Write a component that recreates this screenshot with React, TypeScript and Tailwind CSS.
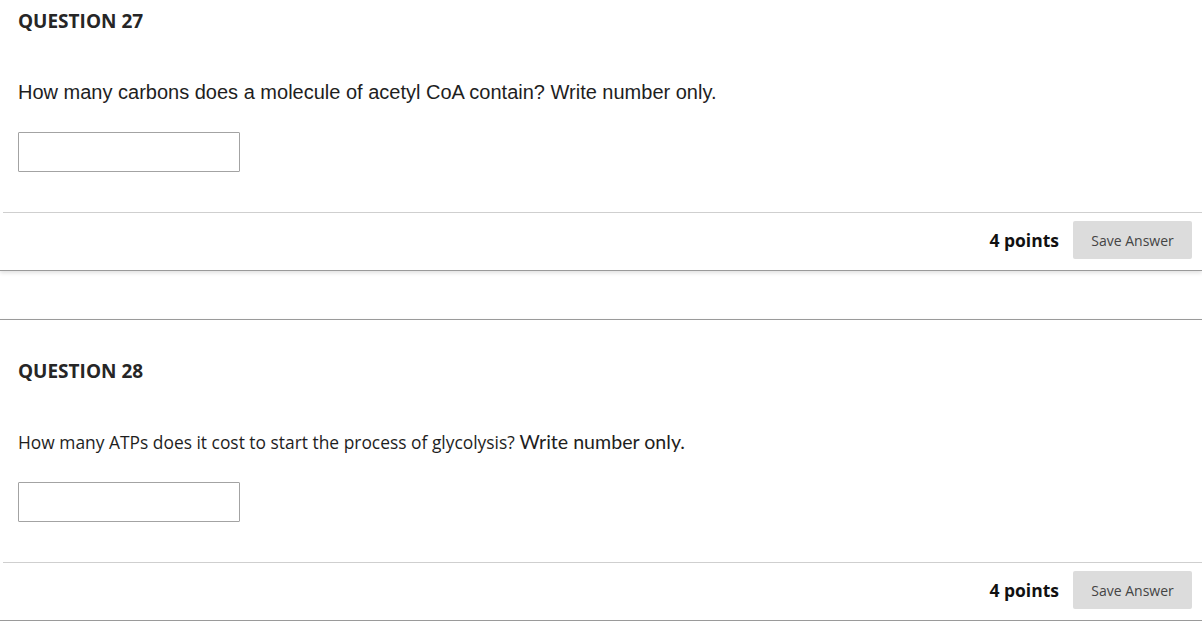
import type { ReactNode } from "react";

function QuestionCard({ title, children, className = "" }: { title: string; children: ReactNode; className?: string }) {
    return (
        <section className={`border-y border-[#9a9a9a] bg-white shadow-[0_2px_4px_rgba(0,0,0,0.12)] ${className}`}>
            {/* title */}
            <div className="pt-[39px] pl-[18px]">
                <h3
                    className="text-[19px] leading-[24px] font-bold text-[#262626]"
                    style={{ fontFamily: "'Open Sans', sans-serif" }}
                >
                    {title}
                </h3>
            </div>

            {/* question text */}
            <div className="mt-[47px] pl-[18px] h-[24px] flex items-center text-[#1e1e1e]">{children}</div>

            {/* answer box */}
            <div className="mt-[28px] pl-[18px]">
                <input type="text" className="block w-[222px] h-[40px] border border-[#a3a3a3] rounded-[1px] bg-white outline-none" />
            </div>

            {/* footer */}
            <div className="mt-[40px] ml-[3px] border-t border-[#cfcfcf] pt-[8px] pb-[11px] pr-[10px] flex items-center justify-end gap-[14px]">
                <span
                    className="text-[17.5px] font-bold text-[#111]"
                    style={{ fontFamily: "'Open Sans', sans-serif" }}
                >
                    4 points
                </span>
                <button
                    className="w-[119px] h-[38px] rounded-[2px] bg-[#dcdcdc] text-[14px] text-[#444]"
                    style={{ fontFamily: "'Open Sans', sans-serif" }}
                >
                    Save Answer
                </button>
            </div>
        </section>
    );
}

export default function App() {
    return (
        <div className="w-[1202px] h-[621px] overflow-hidden bg-white">
            <div className="-mt-[31px]">
                <QuestionCard title="QUESTION 27">
                    <p className="text-[20px] leading-[24px]" style={{ fontFamily: "'Liberation Sans', Arial, sans-serif" }}>
                        How many carbons does a molecule of acetyl CoA contain? Write number only.
                    </p>
                </QuestionCard>

                <QuestionCard title="QUESTION 28" className="mt-[48px]">
                    <p className="leading-[24px] whitespace-pre">
                        <span className="text-[17.4px]" style={{ fontFamily: "'Open Sans', sans-serif" }}>
                            How many ATPs does it cost to start the process of glycolysis?
                        </span>
                        <span className="text-[19.6px]" style={{ fontFamily: "Lato, sans-serif" }}>
                            {" "}Write number only.
                        </span>
                    </p>
                </QuestionCard>
            </div>
        </div>
    );
}
